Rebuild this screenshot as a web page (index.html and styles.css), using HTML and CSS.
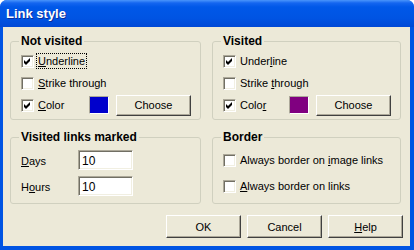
FILE: index.html
```html
<!DOCTYPE html>
<html lang="en">
<head>
  <meta charset="UTF-8" />
  <title>Link style</title>
  <link rel="stylesheet" href="styles.css">
</head>
<body>
  <div class="window">
    <div class="titlebar">Link style</div>

    <div class="client">
      <div class="groups">
        <fieldset class="group">
          <legend>Not visited</legend>
          <div class="row">
            <span class="box checked"></span>
            <span class="label focus"><u>U</u>nderline</span>
          </div>
          <div class="row">
            <span class="box"></span>
            <span class="label"><u>S</u>trike through</span>
          </div>
          <div class="row">
            <span class="box checked"></span>
            <span class="label grow"><u>C</u>olor</span>
            <span class="swatch blue"></span>
            <button type="button">Choose</button>
          </div>
        </fieldset>

        <fieldset class="group">
          <legend>Visited</legend>
          <div class="row">
            <span class="box checked"></span>
            <span class="label">Under<u>l</u>ine</span>
          </div>
          <div class="row">
            <span class="box"></span>
            <span class="label">Strike <u>t</u>hrough</span>
          </div>
          <div class="row">
            <span class="box checked"></span>
            <span class="label grow">Colo<u>r</u></span>
            <span class="swatch purple"></span>
            <button type="button">Choose</button>
          </div>
        </fieldset>

        <fieldset class="group">
          <legend>Visited links marked</legend>
          <div class="row tall">
            <span class="field-label"><u>D</u>ays</span>
            <input type="text" value="10" />
          </div>
          <div class="row tall">
            <span class="field-label">H<u>o</u>urs</span>
            <input type="text" value="10" />
          </div>
        </fieldset>

        <fieldset class="group">
          <legend>Border</legend>
          <div class="row tall">
            <span class="box"></span>
            <span class="label">Always border on <u>i</u>mage links</span>
          </div>
          <div class="row tall">
            <span class="box"></span>
            <span class="label"><u>A</u>lways border on links</span>
          </div>
        </fieldset>
      </div>

      <div class="buttons">
        <button type="button">OK</button>
        <button type="button">Cancel</button>
        <button type="button"><u>H</u>elp</button>
      </div>
    </div>
  </div>
</body>
</html>
```

FILE: styles.css
```css
body { margin: 0; background: #fff; font-family: "Liberation Sans", Arial, sans-serif; font-size: 11px; color: #000; }
u { text-decoration: underline; text-underline-offset: 1px; }

.window { width: 414px; height: 250px; box-sizing: border-box; display: flex; flex-direction: column; background: #0054e3; border-radius: 7px 7px 0 0; overflow: hidden; }
.titlebar { height: 27px; box-sizing: border-box; padding: 4px 0 0 6px; line-height: 20px; color: #fff; font-size: 13px; font-weight: bold; background: linear-gradient(#4a95fb 0, #1466f0 3px, #0058e8 7px, #0054e3 18px, #0048d6 27px); text-shadow: 1px 1px #0a2f9c; }
.client { flex: 1; margin: 0 4px 4px 3px; background: #ece9d8; padding: 7px 0 0 7px; }

.groups { display: grid; grid-template-columns: 191px 189px; column-gap: 11px; row-gap: 10px; }
.group { margin: 0; min-width: 0; border: 1px solid #d0d0bf; border-radius: 3px; padding: 2px 9px 3px 10px; }
.group legend { margin-left: -2px; padding: 0 2px; font-size: 12px; font-weight: bold; line-height: 14px; }
.group:nth-child(n+3) { padding-top: 3px; padding-bottom: 4px; }

.row { display: flex; align-items: center; height: 22px; }
.row.tall { height: 26px; }
.label { margin-left: 2px; padding: 1px; border: 1px dotted transparent; white-space: nowrap; margin-right: -2px; }
.label.focus { border-color: #000; }
.grow { flex: 1; }

.box { width: 13px; height: 13px; box-sizing: border-box; flex: none; background: #fff; border: 1px solid; border-color: #aca899 #fff #fff #aca899; box-shadow: inset 1px 1px #716f64, inset -1px -1px #f1efe2; }
.box.checked { background: #fff url("data:image/svg+xml,%3Csvg xmlns='http://www.w3.org/2000/svg' width='11' height='11'%3E%3Cpath d='M2 4l2 2 4-4v3l-4 4-2-2z' fill='%23000'/%3E%3C/svg%3E") no-repeat 0 0; }

.swatch { width: 20px; height: 18px; box-sizing: border-box; margin-right: 7px; border: 1px solid; border-color: #aca899 #fff #fff #aca899; }
.swatch.blue { background: #0000cc; }
.swatch.purple { background: #800080; }

button { width: 75px; height: 21px; padding: 0; font: inherit; color: #000; background: #ece9d8; border: 1px solid; border-color: #fff #404040 #404040 #fff; box-shadow: inset -1px -1px #aca899; }
.buttons { display: flex; justify-content: flex-end; gap: 6px; margin: 11px 7px 0 0; }
.buttons button { height: 23px; }

.field-label { width: 57px; padding-top: 1px; }
input { width: 55px; height: 20px; box-sizing: border-box; margin: 0; padding: 2px 3px 0; font: inherit; font-size: 12px; border: 1px solid; border-color: #aca899 #fff #fff #aca899; box-shadow: inset 1px 1px #716f64, inset -1px -1px #f1efe2; background: #fff; outline: none; }
```
